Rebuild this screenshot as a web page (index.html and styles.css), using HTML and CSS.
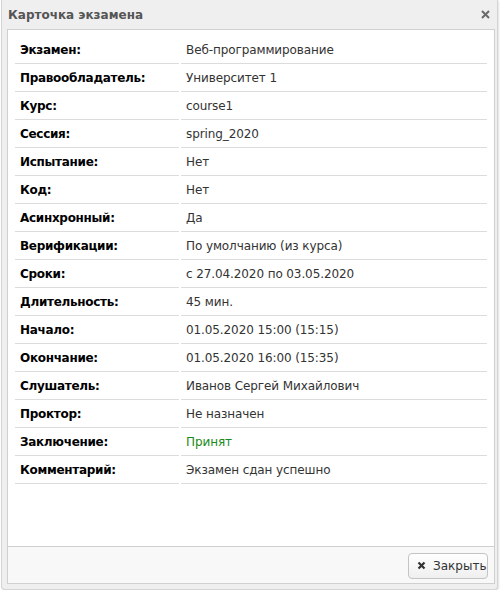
FILE: index.html
```html
<!DOCTYPE html>
<html>
<head>
<meta charset="utf-8">
<link rel="stylesheet" href="styles.css">
</head>
<body>
<div class="dialog">
  <div class="titlebar">
    <span class="title">Карточка экзамена</span>
    <span class="close">
      <svg width="9" height="9" viewBox="0 0 9 9"><path d="M1 1L8 8M8 1L1 8" stroke="#6a6a6a" stroke-width="2"/></svg>
    </span>
  </div>
  <div class="panel">
    <div class="content">
      <table class="info">
        <tr><td class="lbl">Экзамен:</td><td class="val">Веб-программирование</td></tr>
        <tr><td class="lbl">Правообладатель:</td><td class="val">Университет 1</td></tr>
        <tr><td class="lbl">Курс:</td><td class="val">course1</td></tr>
        <tr><td class="lbl">Сессия:</td><td class="val">spring_2020</td></tr>
        <tr><td class="lbl">Испытание:</td><td class="val">Нет</td></tr>
        <tr><td class="lbl">Код:</td><td class="val">Нет</td></tr>
        <tr><td class="lbl">Асинхронный:</td><td class="val">Да</td></tr>
        <tr><td class="lbl">Верификации:</td><td class="val">По умолчанию (из курса)</td></tr>
        <tr><td class="lbl">Сроки:</td><td class="val">с 27.04.2020 по 03.05.2020</td></tr>
        <tr><td class="lbl">Длительность:</td><td class="val">45 мин.</td></tr>
        <tr><td class="lbl">Начало:</td><td class="val">01.05.2020 15:00 (15:15)</td></tr>
        <tr><td class="lbl">Окончание:</td><td class="val">01.05.2020 16:00 (15:35)</td></tr>
        <tr><td class="lbl">Слушатель:</td><td class="val">Иванов Сергей Михайлович</td></tr>
        <tr><td class="lbl">Проктор:</td><td class="val">Не назначен</td></tr>
        <tr><td class="lbl">Заключение:</td><td class="val ok">Принят</td></tr>
        <tr><td class="lbl">Комментарий:</td><td class="val">Экзамен сдан успешно</td></tr>
      </table>
    </div>
    <div class="footer">
      <button class="btn">
        <svg width="9" height="9" viewBox="0 0 9 9"><path d="M1.5 1.5L7.5 7.5M7.5 1.5L1.5 7.5" stroke="#333" stroke-width="2.2"/></svg>
        <span>Закрыть</span>
      </button>
    </div>
  </div>
</div>
</body>
</html>
```

FILE: styles.css
```css
html, body {
  margin: 0;
  padding: 0;
  background: #ffffff;
}
body {
  font-family: "DejaVu Sans", Verdana, sans-serif;
  font-size: 12px;
}
.dialog {
  width: 495px;
  height: 589px;
  margin-left: 1px;
  background: #efefef;
  border: 1px solid #d4d4d4;
  border-top: none;
  border-radius: 0 0 4px 4px;
  box-shadow: 1px 1px 2px rgba(0,0,0,0.12);
  display: flex;
  flex-direction: column;
}
.titlebar {
  height: 29px;
  display: flex;
  align-items: center;
  justify-content: space-between;
  padding: 0 7px 0 6px;
}
.title {
  font-weight: bold;
  color: #555;
  font-size: 12px;
  margin-top: 1px;
}
.close {
  display: flex;
  margin-top: -1px;
}
.panel {
  margin: 0 2px 0 5px;
  border: 1px solid #d0d0d0;
  display: flex;
  flex-direction: column;
  height: 553px;
}
.content {
  background: #fff;
  flex: 1;
  padding: 6px 6px 0 7px;
}
.info {
  border-collapse: separate;
  border-spacing: 2px 0;
  margin-left: -2px;
  width: 476px;
}
.info td {
  height: 27px;
  border-bottom: 1px solid #dcdcdc;
  padding: 0 5px;
  vertical-align: middle;
  white-space: nowrap;
}
.info .lbl {
  width: 154px;
  font-weight: bold;
  color: #000;
  letter-spacing: -0.3px;
}
.info .val {
  color: #333;
  letter-spacing: -0.1px;
}
.info .ok {
  color: #1a8a1a;
}
.footer {
  height: 36px;
  background: #f8f8f8;
  border-top: 1px solid #d0d0d0;
  display: flex;
  align-items: center;
  justify-content: flex-end;
  padding-right: 6px;
}
.btn {
  height: 26px;
  width: 80px;
  border: 1px solid #c4c4c4;
  border-radius: 4px;
  background: linear-gradient(#ffffff, #efefef);
  font-family: "DejaVu Sans", Verdana, sans-serif;
  font-size: 12px;
  color: #333;
  display: flex;
  align-items: center;
  gap: 7px;
  padding: 0 0 0 8px;
  margin-top: 1px;
}
```
